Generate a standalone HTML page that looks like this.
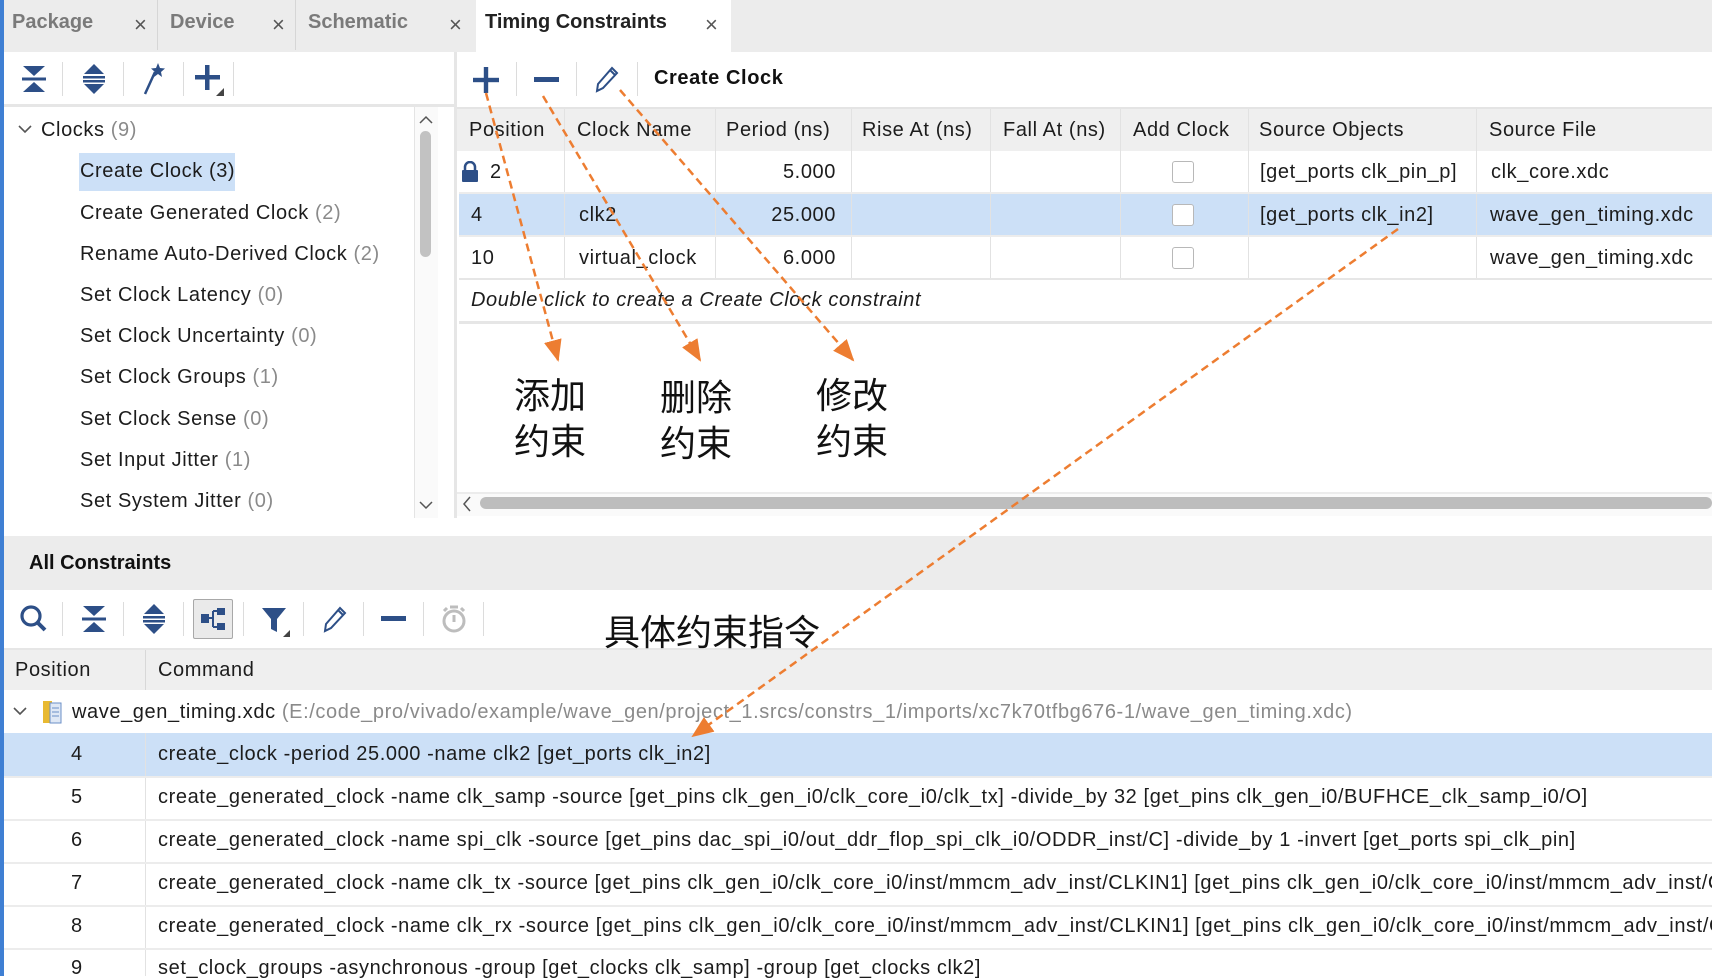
<!DOCTYPE html>
<html><head><meta charset="utf-8"><style>
*{margin:0;padding:0;box-sizing:border-box}
body{width:1712px;height:976px;position:relative;overflow:hidden;background:#fff;font-family:"Liberation Sans","Noto Sans CJK SC",sans-serif;color:#1c1c1c;font-size:20px;letter-spacing:0.6px}
.a{position:absolute;white-space:nowrap}
.t{letter-spacing:0}
.g{color:#8a8a8a}
.sep{position:absolute;width:1px;background:#dcdcdc}
.hl{background:#cce0f7}
.cb{position:absolute;width:22px;height:22px;border:1px solid #b8b8b8;border-radius:3px;background:#fff}
.cn{font-family:"Noto Sans CJK SC","WenQuanYi Zen Hei",sans-serif;font-size:36px;color:#111;line-height:46px;letter-spacing:0}
.clip{width:1554px;overflow:hidden}
</style></head><body>
<div class="a" style="left:0;top:0;width:4px;height:976px;background:#3f7fd3"></div>
<div class="a" style="left:4px;top:0;width:1708px;height:52px;background:#ececec"></div>
<div class="a" style="left:4px;top:0;width:154px;height:50px;background:#ececec;border-right:1px solid #d6d6d6"></div>
<div class="a" style="left:162px;top:0;width:134px;height:50px;border-right:1px solid #d6d6d6"></div>
<div class="a" style="left:476px;top:0;width:255px;height:52px;background:#fff"></div>
<div class="a t" style="left:12px;top:11px;font-weight:bold;color:#7a7a7a">Package</div>
<div class="a t" style="left:134px;top:12px;color:#555;font-size:22px">×</div>
<div class="a t" style="left:170px;top:11px;font-weight:bold;color:#7a7a7a">Device</div>
<div class="a t" style="left:272px;top:12px;color:#555;font-size:22px">×</div>
<div class="a t" style="left:308px;top:11px;font-weight:bold;color:#7a7a7a">Schematic</div>
<div class="a t" style="left:449px;top:12px;color:#555;font-size:22px">×</div>
<div class="a t" style="left:485px;top:11px;font-weight:bold;color:#222">Timing Constraints</div>
<div class="a t" style="left:705px;top:12px;color:#555;font-size:22px">×</div>

<div class="a" style="left:4px;top:52px;width:450px;height:55px;background:#fff;border-bottom:3px solid #e6e6e6"></div>
<svg class="a" style="left:20px;top:64px" width="28" height="30" viewBox="0 0 28 30" fill="#2d4f87"><path d="M3 2h22L14 12z"/><rect x="2" y="13.5" width="24" height="3"/><path d="M3 28h22L14 18z"/></svg>
<div class="sep" style="left:62px;top:62px;height:34px"></div>
<svg class="a" style="left:80px;top:63px" width="28" height="32" viewBox="0 0 28 32" fill="#2d4f87"><path d="M14 1L4 11h20z"/><rect x="3" y="13" width="22" height="2.5"/><rect x="3" y="17" width="22" height="2.5"/><path d="M14 31L4 21h20z"/></svg>
<div class="sep" style="left:123px;top:62px;height:34px"></div>
<svg class="a" style="left:140px;top:62px" width="28" height="34" viewBox="0 0 28 34"><path d="M15 10L5 32" stroke="#2d4f87" stroke-width="2.5"/><path d="M18 1l2 5 5 .5-4 3.5 1 5-4-3-4 3 1-5-4-3.5 5-.5z" fill="#2d4f87"/></svg>
<div class="sep" style="left:183px;top:62px;height:34px"></div>
<svg class="a" style="left:193px;top:63px" width="34" height="34" viewBox="0 0 34 34"><rect x="12" y="2" width="4.5" height="25" fill="#2d4f87"/><rect x="2" y="12" width="25" height="4.5" fill="#2d4f87"/><path d="M31 25v8h-8z" fill="#444"/></svg>
<div class="sep" style="left:233px;top:62px;height:34px"></div>

<div class="a" style="left:454px;top:52px;width:3px;height:466px;background:#e6e6e6"></div>
<svg class="a" style="left:472px;top:66px" width="28" height="28" viewBox="0 0 28 28" fill="#2d4f87"><rect x="11.8" y="1" width="4.4" height="26"/><rect x="1" y="11.8" width="26" height="4.4"/></svg>
<div class="sep" style="left:516px;top:62px;height:34px"></div>
<div class="a" style="left:534px;top:77px;width:25px;height:5px;background:#2d4f87"></div>
<div class="sep" style="left:576px;top:62px;height:34px"></div>
<svg class="a" style="left:592px;top:64px" width="30" height="30" viewBox="0 0 30 30" fill="none" stroke="#2d4f87" stroke-width="2"><path d="M5 27l1-7L20 4l5 5L11 24z M18 6l5 5"/></svg>
<div class="sep" style="left:637px;top:62px;height:34px"></div>
<div class="a" style="left:654px;top:67px;font-weight:bold;color:#111">Create Clock</div>

<div class="a" style="left:4px;top:107px;width:450px;height:411px;background:#fff"></div>
<svg class="a" style="left:18px;top:124px" width="14" height="10" viewBox="0 0 14 10"><path d="M1 2l6 6 6-6" fill="none" stroke="#555" stroke-width="1.6"/></svg>
<div class="a" style="left:41px;top:119px">Clocks <span class="g">(9)</span></div>
<div class="a hl" style="left:79px;top:153px;width:156px;height:38px"></div>
<div class="a" style="left:80px;top:160px">Create Clock (3)</div>
<div class="a" style="left:80px;top:202px">Create Generated Clock <span class="g">(2)</span></div>
<div class="a" style="left:80px;top:243px">Rename Auto-Derived Clock <span class="g">(2)</span></div>
<div class="a" style="left:80px;top:284px">Set Clock Latency <span class="g">(0)</span></div>
<div class="a" style="left:80px;top:325px">Set Clock Uncertainty <span class="g">(0)</span></div>
<div class="a" style="left:80px;top:366px">Set Clock Groups <span class="g">(1)</span></div>
<div class="a" style="left:80px;top:408px">Set Clock Sense <span class="g">(0)</span></div>
<div class="a" style="left:80px;top:449px">Set Input Jitter <span class="g">(1)</span></div>
<div class="a" style="left:80px;top:490px">Set System Jitter <span class="g">(0)</span></div>
<div class="a" style="left:414px;top:107px;width:24px;height:411px;background:#fafafa;border-left:1px solid #e4e4e4"></div>
<svg class="a" style="left:419px;top:115px" width="14" height="10" viewBox="0 0 14 10"><path d="M1 8l6-6 6 6" fill="none" stroke="#555" stroke-width="1.5"/></svg>
<div class="a" style="left:420px;top:131px;width:11px;height:126px;background:#c2c2c2;border-radius:6px"></div>
<svg class="a" style="left:419px;top:500px" width="14" height="10" viewBox="0 0 14 10"><path d="M1 2l6 6 6-6" fill="none" stroke="#555" stroke-width="1.5"/></svg>

<div class="a" style="left:457px;top:107px;width:1255px;height:44px;background:#efefef;border-top:2px solid #e4e4e4"></div>
<div class="a" style="left:469px;top:119px">Position</div>
<div class="a" style="left:577px;top:119px">Clock Name</div>
<div class="a" style="left:726px;top:119px">Period (ns)</div>
<div class="a" style="left:862px;top:119px">Rise At (ns)</div>
<div class="a" style="left:1003px;top:119px">Fall At (ns)</div>
<div class="a" style="left:1133px;top:119px">Add Clock</div>
<div class="a" style="left:1259px;top:119px">Source Objects</div>
<div class="a" style="left:1489px;top:119px">Source File</div>
<div class="a hl" style="left:459px;top:193px;width:1253px;height:43px"></div>
<div class="sep" style="left:564px;top:109px;height:170px;background:#e2e2e2"></div>
<div class="sep" style="left:715px;top:109px;height:170px;background:#e2e2e2"></div>
<div class="sep" style="left:851px;top:109px;height:170px;background:#e2e2e2"></div>
<div class="sep" style="left:990px;top:109px;height:170px;background:#e2e2e2"></div>
<div class="sep" style="left:1120px;top:109px;height:170px;background:#e2e2e2"></div>
<div class="sep" style="left:1248px;top:109px;height:170px;background:#e2e2e2"></div>
<div class="sep" style="left:1476px;top:109px;height:170px;background:#e2e2e2"></div>
<div class="a" style="left:459px;top:192px;width:1253px;height:2px;background:#ececec"></div>
<div class="a" style="left:459px;top:235px;width:1253px;height:2px;background:#ececec"></div>
<div class="a" style="left:459px;top:278px;width:1253px;height:2px;background:#e6e6e6"></div>
<div class="a" style="left:459px;top:321px;width:1253px;height:3px;background:#e6e6e6"></div>
<svg class="a" style="left:461px;top:161px" width="18" height="22" viewBox="0 0 18 22"><path d="M4 10V6a5 5 0 0110 0v4" fill="none" stroke="#2d4f87" stroke-width="2.5"/><rect x="1" y="9" width="16" height="12" rx="1" fill="#2d4f87"/></svg>
<div class="a" style="left:490px;top:161px">2</div>
<div class="a" style="left:780px;top:161px;width:56px;text-align:right">5.000</div>
<div class="cb" style="left:1172px;top:161px"></div>
<div class="a" style="left:1260px;top:161px">[get_ports clk_pin_p]</div>
<div class="a" style="left:1491px;top:161px">clk_core.xdc</div>
<div class="a" style="left:471px;top:204px">4</div>
<div class="a" style="left:579px;top:204px">clk2</div>
<div class="a" style="left:760px;top:204px;width:76px;text-align:right">25.000</div>
<div class="cb" style="left:1172px;top:204px"></div>
<div class="a" style="left:1260px;top:204px">[get_ports clk_in2]</div>
<div class="a" style="left:1490px;top:204px">wave_gen_timing.xdc</div>
<div class="a" style="left:471px;top:247px">10</div>
<div class="a" style="left:579px;top:247px">virtual_clock</div>
<div class="a" style="left:780px;top:247px;width:56px;text-align:right">6.000</div>
<div class="cb" style="left:1172px;top:247px"></div>
<div class="a" style="left:1490px;top:247px">wave_gen_timing.xdc</div>
<div class="a" style="left:471px;top:289px;font-style:italic">Double click to create a Create Clock constraint</div>
<div class="a" style="left:457px;top:492px;width:1255px;height:24px;background:#fafafa;border-top:2px solid #ececec"></div>
<svg class="a" style="left:462px;top:496px" width="10" height="16" viewBox="0 0 10 16"><path d="M8 1L2 8l6 7" fill="none" stroke="#555" stroke-width="1.5"/></svg>
<div class="a" style="left:480px;top:497px;width:1232px;height:12px;background:#bdbdbd;border-radius:6px"></div>

<div class="a" style="left:4px;top:518px;width:1708px;height:72px;background:#ececec;border-top:18px solid #fff"></div>
<div class="a t" style="left:29px;top:552px;font-weight:bold;color:#111">All Constraints</div>
<div class="a" style="left:4px;top:590px;width:1708px;height:58px;background:#fff"></div>
<svg class="a" style="left:19px;top:604px" width="30" height="30" viewBox="0 0 30 30" fill="none" stroke="#2d4f87"><circle cx="12" cy="12" r="9" stroke-width="3.2"/><path d="M19 19l7 7" stroke-width="4"/></svg>
<div class="sep" style="left:62px;top:602px;height:34px"></div>
<svg class="a" style="left:80px;top:604px" width="28" height="30" viewBox="0 0 28 30" fill="#2d4f87"><path d="M3 2h22L14 12z"/><rect x="2" y="13.5" width="24" height="3"/><path d="M3 28h22L14 18z"/></svg>
<div class="sep" style="left:123px;top:602px;height:34px"></div>
<svg class="a" style="left:140px;top:603px" width="28" height="32" viewBox="0 0 28 32" fill="#2d4f87"><path d="M14 1L4 11h20z"/><rect x="3" y="13" width="22" height="2.5"/><rect x="3" y="17" width="22" height="2.5"/><path d="M14 31L4 21h20z"/></svg>
<div class="sep" style="left:183px;top:602px;height:34px"></div>
<div class="a" style="left:193px;top:599px;width:40px;height:40px;background:#eaeaea;border:1px solid #a8a8a8;border-radius:2px"></div>
<svg class="a" style="left:199px;top:605px" width="28" height="28" viewBox="0 0 28 28" fill="#2d4f87"><rect x="2" y="9" width="8" height="9"/><rect x="18" y="3" width="8" height="7"/><rect x="18" y="18" width="8" height="7"/><path d="M10 13h4M14 6v16M14 6h4M14 22h4" stroke="#2d4f87" stroke-width="2"/></svg>
<div class="sep" style="left:243px;top:602px;height:34px"></div>
<svg class="a" style="left:260px;top:606px" width="32" height="32" viewBox="0 0 32 32"><path d="M2 2h24l-9 11v13l-6-3V13z" fill="#2d4f87"/><path d="M30 24v7h-7z" fill="#444"/></svg>
<div class="sep" style="left:303px;top:602px;height:34px"></div>
<svg class="a" style="left:320px;top:604px" width="30" height="30" viewBox="0 0 30 30" fill="none" stroke="#2d4f87" stroke-width="2"><path d="M5 27l1-7L20 4l5 5L11 24z M18 6l5 5"/></svg>
<div class="sep" style="left:363px;top:602px;height:34px"></div>
<div class="a" style="left:381px;top:616px;width:25px;height:5px;background:#2d4f87"></div>
<div class="sep" style="left:423px;top:602px;height:34px"></div>
<svg class="a" style="left:440px;top:604px" width="28" height="30" viewBox="0 0 28 30" fill="none" stroke="#bdbdbd" stroke-width="3"><circle cx="14" cy="17" r="10"/><path d="M14 11v7M10 3h8M4 7l3-3M24 7l-3-3"/></svg>
<div class="sep" style="left:483px;top:602px;height:34px"></div>

<div class="a" style="left:4px;top:648px;width:1708px;height:42px;background:#efefef;border-top:2px solid #e6e6e6"></div>
<div class="sep" style="left:145px;top:650px;height:40px;background:#d8d8d8"></div>
<div class="a" style="left:15px;top:659px">Position</div>
<div class="a" style="left:158px;top:659px">Command</div>

<svg class="a" style="left:13px;top:706px" width="14" height="10" viewBox="0 0 14 10"><path d="M1 2l6 6 6-6" fill="none" stroke="#555" stroke-width="1.6"/></svg>
<svg class="a" style="left:42px;top:700px" width="20" height="24" viewBox="0 0 20 24"><rect x="1" y="1" width="9" height="22" fill="#e8b931"/><rect x="8" y="3" width="11" height="20" fill="#dfe8f5" stroke="#6b8fc7"/><path d="M10 8h7M10 12h7M10 16h7" stroke="#6b8fc7"/></svg>
<div class="a" style="left:72px;top:701px">wave_gen_timing.xdc <span class="g">(E:/code_pro/vivado/example/wave_gen/project_1.srcs/constrs_1/imports/xc7k70tfbg676-1/wave_gen_timing.xdc)</span></div>

<div class="a hl" style="left:4px;top:733px;width:1708px;height:43px"></div>
<div class="sep" style="left:145px;top:733px;height:243px;background:#e2e2e2"></div>
<div class="a" style="left:4px;top:776px;width:1708px;height:2px;background:#ececec"></div>
<div class="a" style="left:4px;top:819px;width:1708px;height:2px;background:#ececec"></div>
<div class="a" style="left:4px;top:862px;width:1708px;height:2px;background:#ececec"></div>
<div class="a" style="left:4px;top:905px;width:1708px;height:2px;background:#ececec"></div>
<div class="a" style="left:4px;top:948px;width:1708px;height:2px;background:#ececec"></div>
<div class="a" style="left:71px;top:743px">4</div>
<div class="a" style="left:158px;top:743px">create_clock -period 25.000 -name clk2 [get_ports clk_in2]</div>
<div class="a" style="left:71px;top:786px">5</div>
<div class="a" style="left:158px;top:786px">create_generated_clock -name clk_samp -source [get_pins clk_gen_i0/clk_core_i0/clk_tx] -divide_by 32 [get_pins clk_gen_i0/BUFHCE_clk_samp_i0/O]</div>
<div class="a" style="left:71px;top:829px">6</div>
<div class="a" style="left:158px;top:829px">create_generated_clock -name spi_clk -source [get_pins dac_spi_i0/out_ddr_flop_spi_clk_i0/ODDR_inst/C] -divide_by 1 -invert [get_ports spi_clk_pin]</div>
<div class="a" style="left:71px;top:872px">7</div>
<div class="a clip" style="left:158px;top:872px">create_generated_clock -name clk_tx -source [get_pins clk_gen_i0/clk_core_i0/inst/mmcm_adv_inst/CLKIN1] [get_pins clk_gen_i0/clk_core_i0/inst/mmcm_adv_inst/CLKOUT0]</div>
<div class="a" style="left:71px;top:915px">8</div>
<div class="a clip" style="left:158px;top:915px">create_generated_clock -name clk_rx -source [get_pins clk_gen_i0/clk_core_i0/inst/mmcm_adv_inst/CLKIN1] [get_pins clk_gen_i0/clk_core_i0/inst/mmcm_adv_inst/CLKOUT1]</div>
<div class="a" style="left:71px;top:957px">9</div>
<div class="a" style="left:158px;top:957px">set_clock_groups -asynchronous -group [get_clocks clk_samp] -group [get_clocks clk2]</div>

<div class="a cn" style="left:514px;top:370px">添加<br>约束</div>
<div class="a cn" style="left:660px;top:372px">删除<br>约束</div>
<div class="a cn" style="left:816px;top:370px">修改<br>约束</div>
<div class="a cn" style="left:604px;top:607px">具体约束指令</div>
<svg class="a" style="left:0;top:0" width="1712" height="976">
<defs><marker id="m" markerWidth="22" markerHeight="18" refX="20" refY="9" orient="auto" markerUnits="userSpaceOnUse" viewBox="0 0 22 18"><path d="M0 0L22 9L0 18z" fill="#ed7d31"/></marker></defs>
<g stroke="#ed7d31" stroke-width="2.5" stroke-dasharray="8 5" fill="none">
<path d="M486 93L558 360" marker-end="url(#m)"/>
<path d="M543 96L700 360" marker-end="url(#m)"/>
<path d="M620 90L853 360" marker-end="url(#m)"/>
<path d="M1398 229L693 736" marker-end="url(#m)"/>
</g></svg>
</body></html>
